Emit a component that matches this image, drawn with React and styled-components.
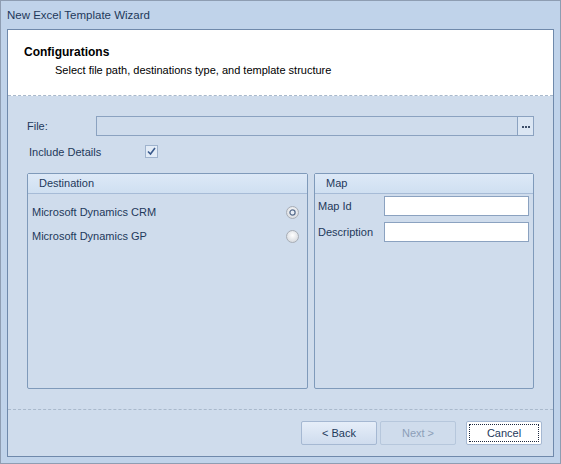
import React from 'react';
import styled, { createGlobalStyle } from 'styled-components';

const Global = createGlobalStyle`
  html, body { margin: 0; padding: 0; background: #bfd2e9; }
  * { box-sizing: border-box; }
`;

const Window = styled.div`
  width: 561px;
  height: 464px;
  display: flex;
  flex-direction: column;
  border: 1px solid #8e9db2;
  background: #c0d3ea;
  padding: 0 6px 6px 6px;
  font-family: "Liberation Sans", Arial, sans-serif;
  font-size: 11px;
  color: #1e395b;
`;

const TitleBar = styled.div`
  height: 28px;
  display: flex;
  align-items: center;
  padding-bottom: 1px;
  font-size: 11.5px;
  color: #1e395b;
`;

const Client = styled.div`
  flex: 1;
  display: flex;
  flex-direction: column;
  border: 1px solid #6f89ab;
  background: #cfdcec;
`;

const Header = styled.div`
  height: 66px;
  background: #fff;
  border-bottom: 1px dashed #a9b9cc;
  padding: 15px 0 0 16px;
`;

const HeaderTitle = styled.div`
  font-weight: bold;
  font-size: 12px;
  color: #000;
  line-height: 14px;
`;

const HeaderSub = styled.div`
  margin-top: 4px;
  padding-left: 31px;
  color: #000;
  line-height: 14px;
`;

const Body = styled.div`
  flex: 1;
  display: flex;
  flex-direction: column;
  padding: 20px 19px 20px 19px;
  border-bottom: 1px dashed #a9b9cc;
`;

const FileRow = styled.div`
  display: flex;
  align-items: center;
  height: 20px;
`;

const Label = styled.span`
  width: ${p => p.$w || 69}px;
  flex-shrink: 0;
`;

const FileBox = styled.div`
  flex: 1;
  display: flex;
  height: 20px;
  border: 1px solid #8ba2c0;
  background: #cfdcec;
`;

const FileField = styled.div`
  flex: 1;
`;

const Ellipsis = styled.div`
  width: 16px;
  border-left: 1px solid #8ba2c0;
  background: #dbe6f3;
  display: flex;
  align-items: center;
  justify-content: center;
  gap: 1px;
  padding-top: 2px;
`;

const Dot = styled.i`
  width: 2px;
  height: 2px;
  background: #3d4f6a;
`;

const CheckRow = styled.div`
  display: flex;
  align-items: center;
  height: 13px;
  margin-top: 9px;
  padding-left: 2px;
`;

const Check = styled.div`
  width: 13px;
  height: 13px;
  border: 1px solid #9fb3cd;
  background: #e3ecf7;
  display: flex;
  align-items: center;
  justify-content: center;
`;

const Groups = styled.div`
  display: grid;
  grid-template-columns: 281px 220px;
  gap: 6px;
  margin-top: 15px;
  flex: 1;
`;

const Group = styled.div`
  border: 1px solid #7f9aba;
  border-radius: 2px;
  display: flex;
  flex-direction: column;
`;

const GroupHead = styled.div`
  height: 20px;
  line-height: 19px;
  padding-left: 11px;
  background: linear-gradient(#dde9f7, #cfdff1);
  border-bottom: 1px solid #a6bbd6;
`;

const GroupBody = styled.div`
  display: flex;
  flex-direction: column;
  padding: ${p => p.$pad};
  gap: ${p => p.$gap}px;
`;

const RadioRow = styled.div`
  display: flex;
  align-items: center;
  justify-content: space-between;
  height: 14px;
  padding-right: 8px;
`;

const FieldRow = styled.div`
  display: flex;
  align-items: center;
  height: 20px;
`;

const TextBox = styled.div`
  width: 145px;
  height: 20px;
  background: #fff;
  border: 1px solid #8ba2c0;
`;

const Footer = styled.div`
  height: 46px;
  display: flex;
  align-items: flex-start;
  padding: 11px 11px 0 0;
  justify-content: flex-end;
`;

const Button = styled.div`
  width: 76px;
  height: 24px;
  margin-left: ${p => p.$ml || 0}px;
  display: flex;
  align-items: center;
  justify-content: center;
  border-radius: 2px;
  border: 1px solid ${p => (p.$disabled ? '#b6c7dc' : '#a5b8d2')};
  background: ${p =>
    p.$focus ? '#ffffff' : p.$disabled ? '#cfdcec' : 'linear-gradient(#e6eef9, #cfdcee)'};
  color: ${p => (p.$disabled ? '#8d9fb8' : '#1e395b')};
  position: relative;
`;

const Focus = styled.div`
  position: absolute;
  inset: 2px;
  border: 1px dotted #1e2a40;
`;

const Radio = ({ checked }) => (
  <svg width="13" height="13" viewBox="0 0 13 13">
    <defs>
      <radialGradient id={checked ? 'rg1' : 'rg2'} cx="50%" cy="40%" r="60%">
        <stop offset="0%" stopColor="#ffffff" />
        <stop offset="100%" stopColor="#d6d9de" />
      </radialGradient>
    </defs>
    <circle cx="6.5" cy="6.5" r="6" fill={`url(#${checked ? 'rg1' : 'rg2'})`} stroke="#a7adb6" strokeWidth="1" />
    {checked && <circle cx="6.5" cy="6.5" r="2.6" fill="#e8eef6" stroke="#5a6f8e" strokeWidth="1.3" />}
  </svg>
);

export default function App() {
  return (
    <>
      <Global />
      <Window>
        <TitleBar>New Excel Template Wizard</TitleBar>
        <Client>
          <Header>
            <HeaderTitle>Configurations</HeaderTitle>
            <HeaderSub>Select file path, destinations type, and template structure</HeaderSub>
          </Header>
          <Body>
            <FileRow>
              <Label>File:</Label>
              <FileBox>
                <FileField />
                <Ellipsis><Dot /><Dot /><Dot /></Ellipsis>
              </FileBox>
            </FileRow>
            <CheckRow>
              <Label $w={116}>Include Details</Label>
              <Check>
                <svg width="9" height="9" viewBox="0 0 9 9">
                  <path d="M1 4.5 L3.5 7 L8 1" fill="none" stroke="#3a5a8c" strokeWidth="1.6" />
                </svg>
              </Check>
            </CheckRow>
            <Groups>
              <Group>
                <GroupHead>Destination</GroupHead>
                <GroupBody $pad="11px 0 0 4px" $gap={10}>
                  <RadioRow>
                    <span>Microsoft Dynamics CRM</span>
                    <Radio checked />
                  </RadioRow>
                  <RadioRow>
                    <span>Microsoft Dynamics GP</span>
                    <Radio />
                  </RadioRow>
                </GroupBody>
              </Group>
              <Group>
                <GroupHead>Map</GroupHead>
                <GroupBody $pad="2px 0 0 3px" $gap={6}>
                  <FieldRow>
                    <Label $w={66}>Map Id</Label>
                    <TextBox />
                  </FieldRow>
                  <FieldRow>
                    <Label $w={66}>Description</Label>
                    <TextBox />
                  </FieldRow>
                </GroupBody>
              </Group>
            </Groups>
          </Body>
          <Footer>
            <Button>&lt; Back</Button>
            <Button $disabled $ml={3}>Next &gt;</Button>
            <Button $focus $ml={10}>Cancel<Focus /></Button>
          </Footer>
        </Client>
      </Window>
    </>
  );
}
